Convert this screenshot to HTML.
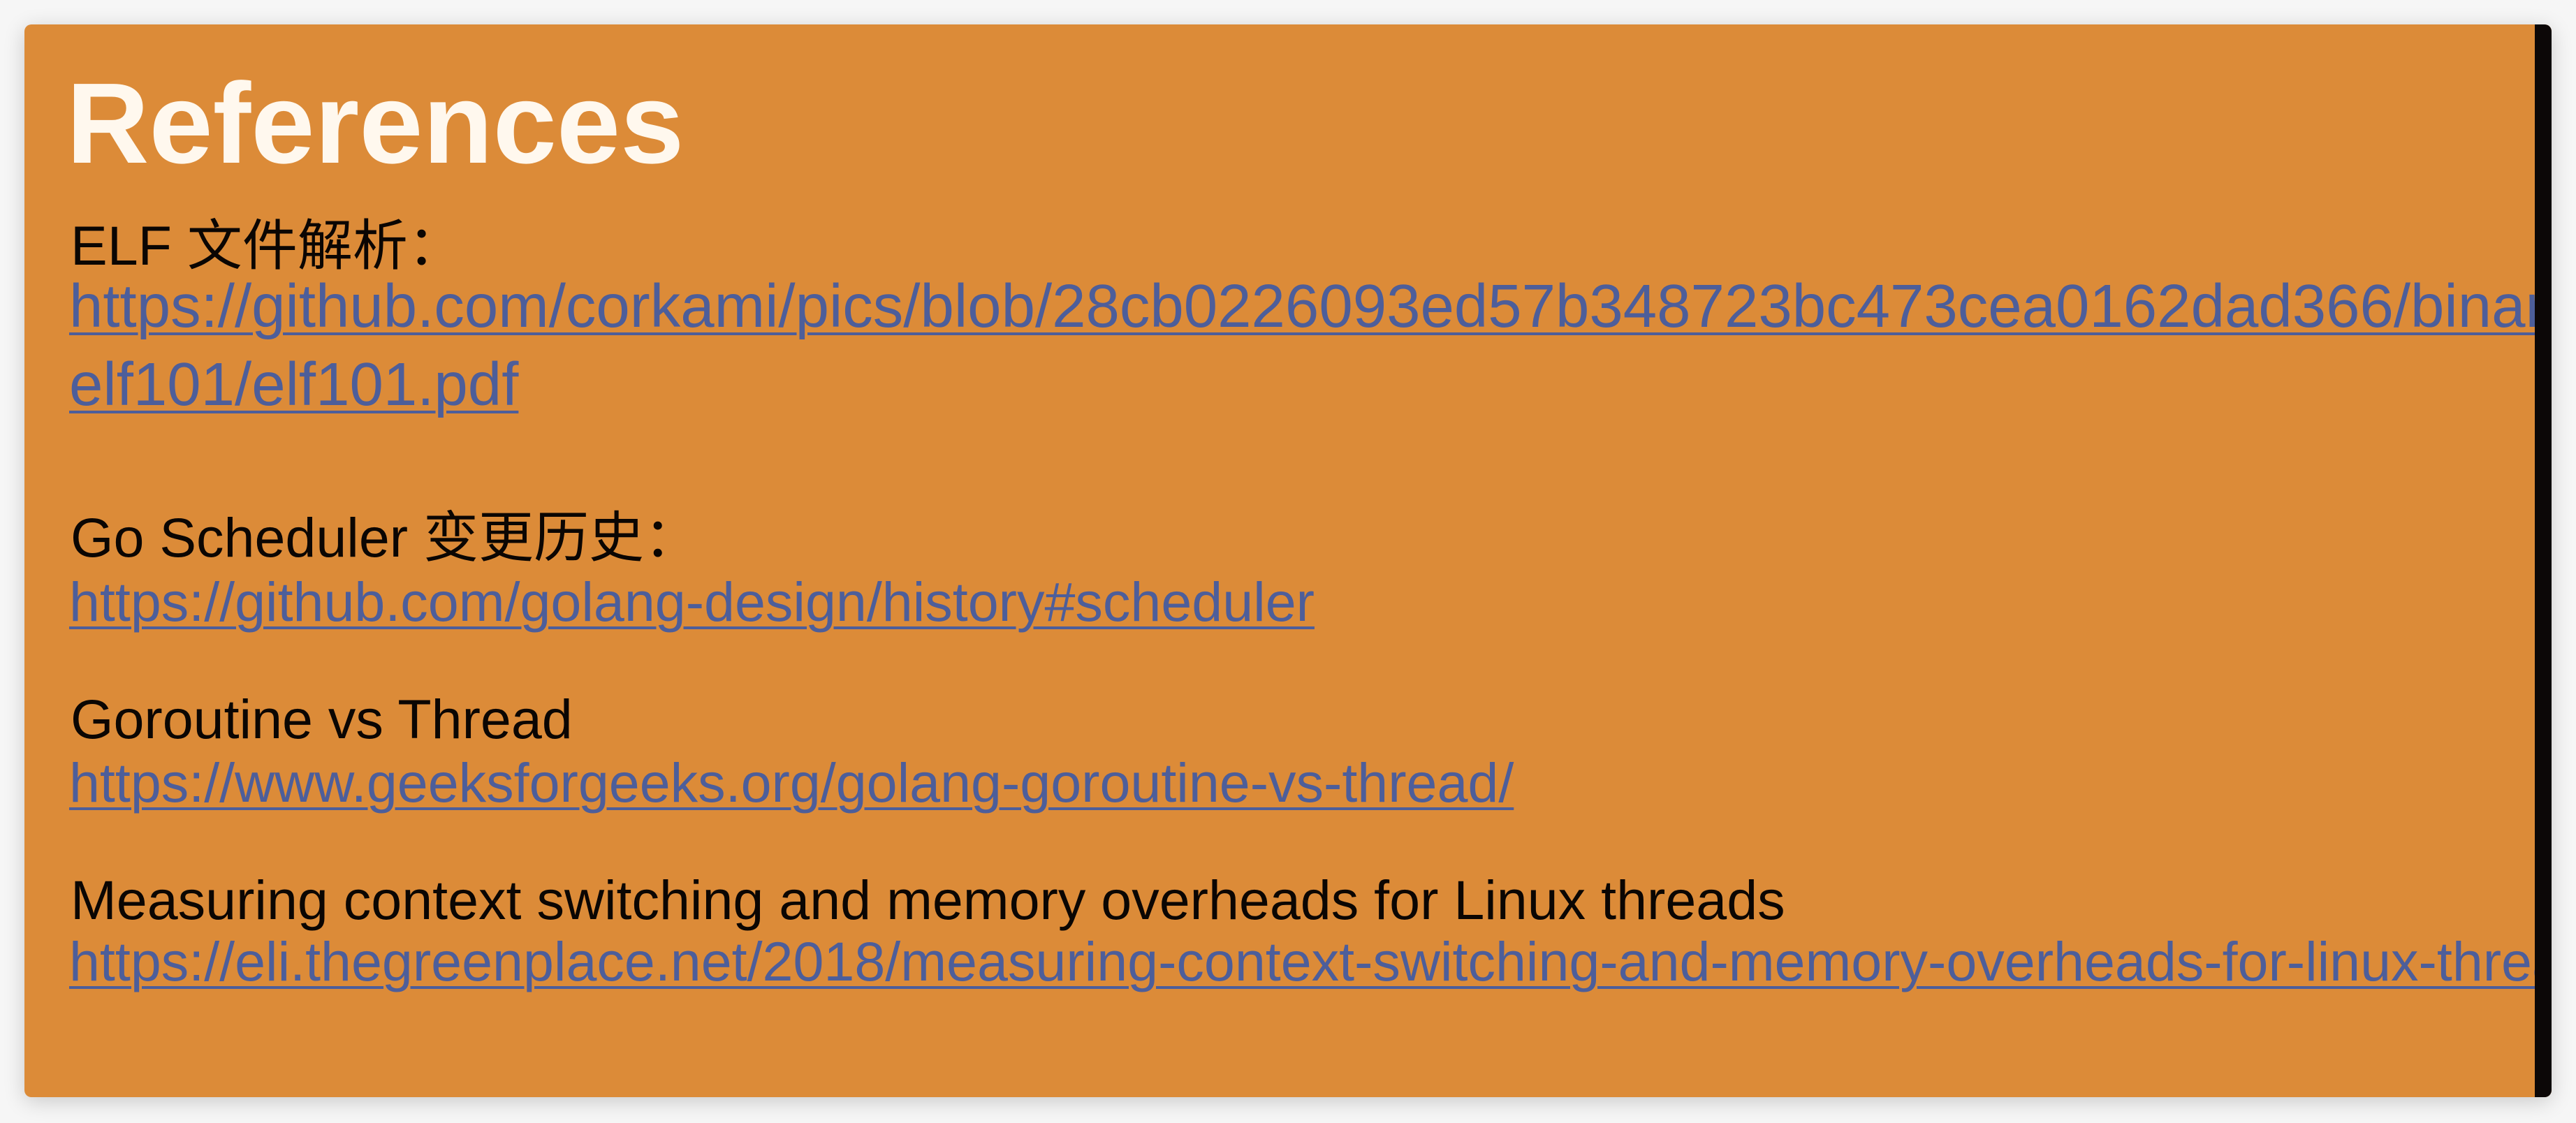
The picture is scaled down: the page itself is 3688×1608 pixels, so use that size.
<!DOCTYPE html>
<html><head><meta charset="utf-8"><style>
html,body{margin:0;padding:0;width:3688px;height:1608px;background:#f6f6f6;overflow:hidden}
.card{position:absolute;left:35px;top:35px;width:3618px;height:1536px;background:#dc8b38;border-radius:10px;box-shadow:0 6px 30px rgba(0,0,0,0.18);overflow:hidden}
.bar{position:absolute;right:0;top:0;width:24px;height:100%;background:#0c0707}
.t{position:absolute;white-space:nowrap;font-family:"Liberation Sans","Noto Sans CJK SC",sans-serif;color:#0b0603}
.title{left:60px;top:48px;font-size:164px;font-weight:bold;color:#fff8ee}
.a{color:#4d5e9a;text-decoration:underline;text-decoration-thickness:4px;text-underline-offset:8px}
.clip{position:absolute;left:0;top:0;width:3594px;height:100%;overflow:hidden}
</style></head><body>
<div class="card"><div class="clip">
<div class="t title">References</div>
<div class="t" style="left:66px;top:252px;font-size:79px">ELF 文件解析：</div>
<div class="t a" style="left:64px;top:354px;font-size:87px">https://github.com/corkami/pics/blob/28cb0226093ed57b348723bc473cea0162dad366/binary/</div>
<div class="t a" style="left:64px;top:466px;font-size:87px">elf101/elf101.pdf</div>
<div class="t" style="left:66px;top:670px;font-size:79px">Go Scheduler 变更历史：</div>
<div class="t a" style="left:64px;top:781px;font-size:79px">https://github.com/golang-design/history#scheduler</div>
<div class="t" style="left:66px;top:949px;font-size:79px">Goroutine vs Thread</div>
<div class="t a" style="left:64px;top:1040px;font-size:79px">https://www.geeksforgeeks.org/golang-goroutine-vs-thread/</div>
<div class="t" style="left:66px;top:1208px;font-size:79px">Measuring context switching and memory overheads for Linux threads</div>
<div class="t a" style="left:64px;top:1296px;font-size:79px">https://eli.thegreenplace.net/2018/measuring-context-switching-and-memory-overheads-for-linux-threads/</div>
</div><div class="bar"></div></div>
</body></html>
